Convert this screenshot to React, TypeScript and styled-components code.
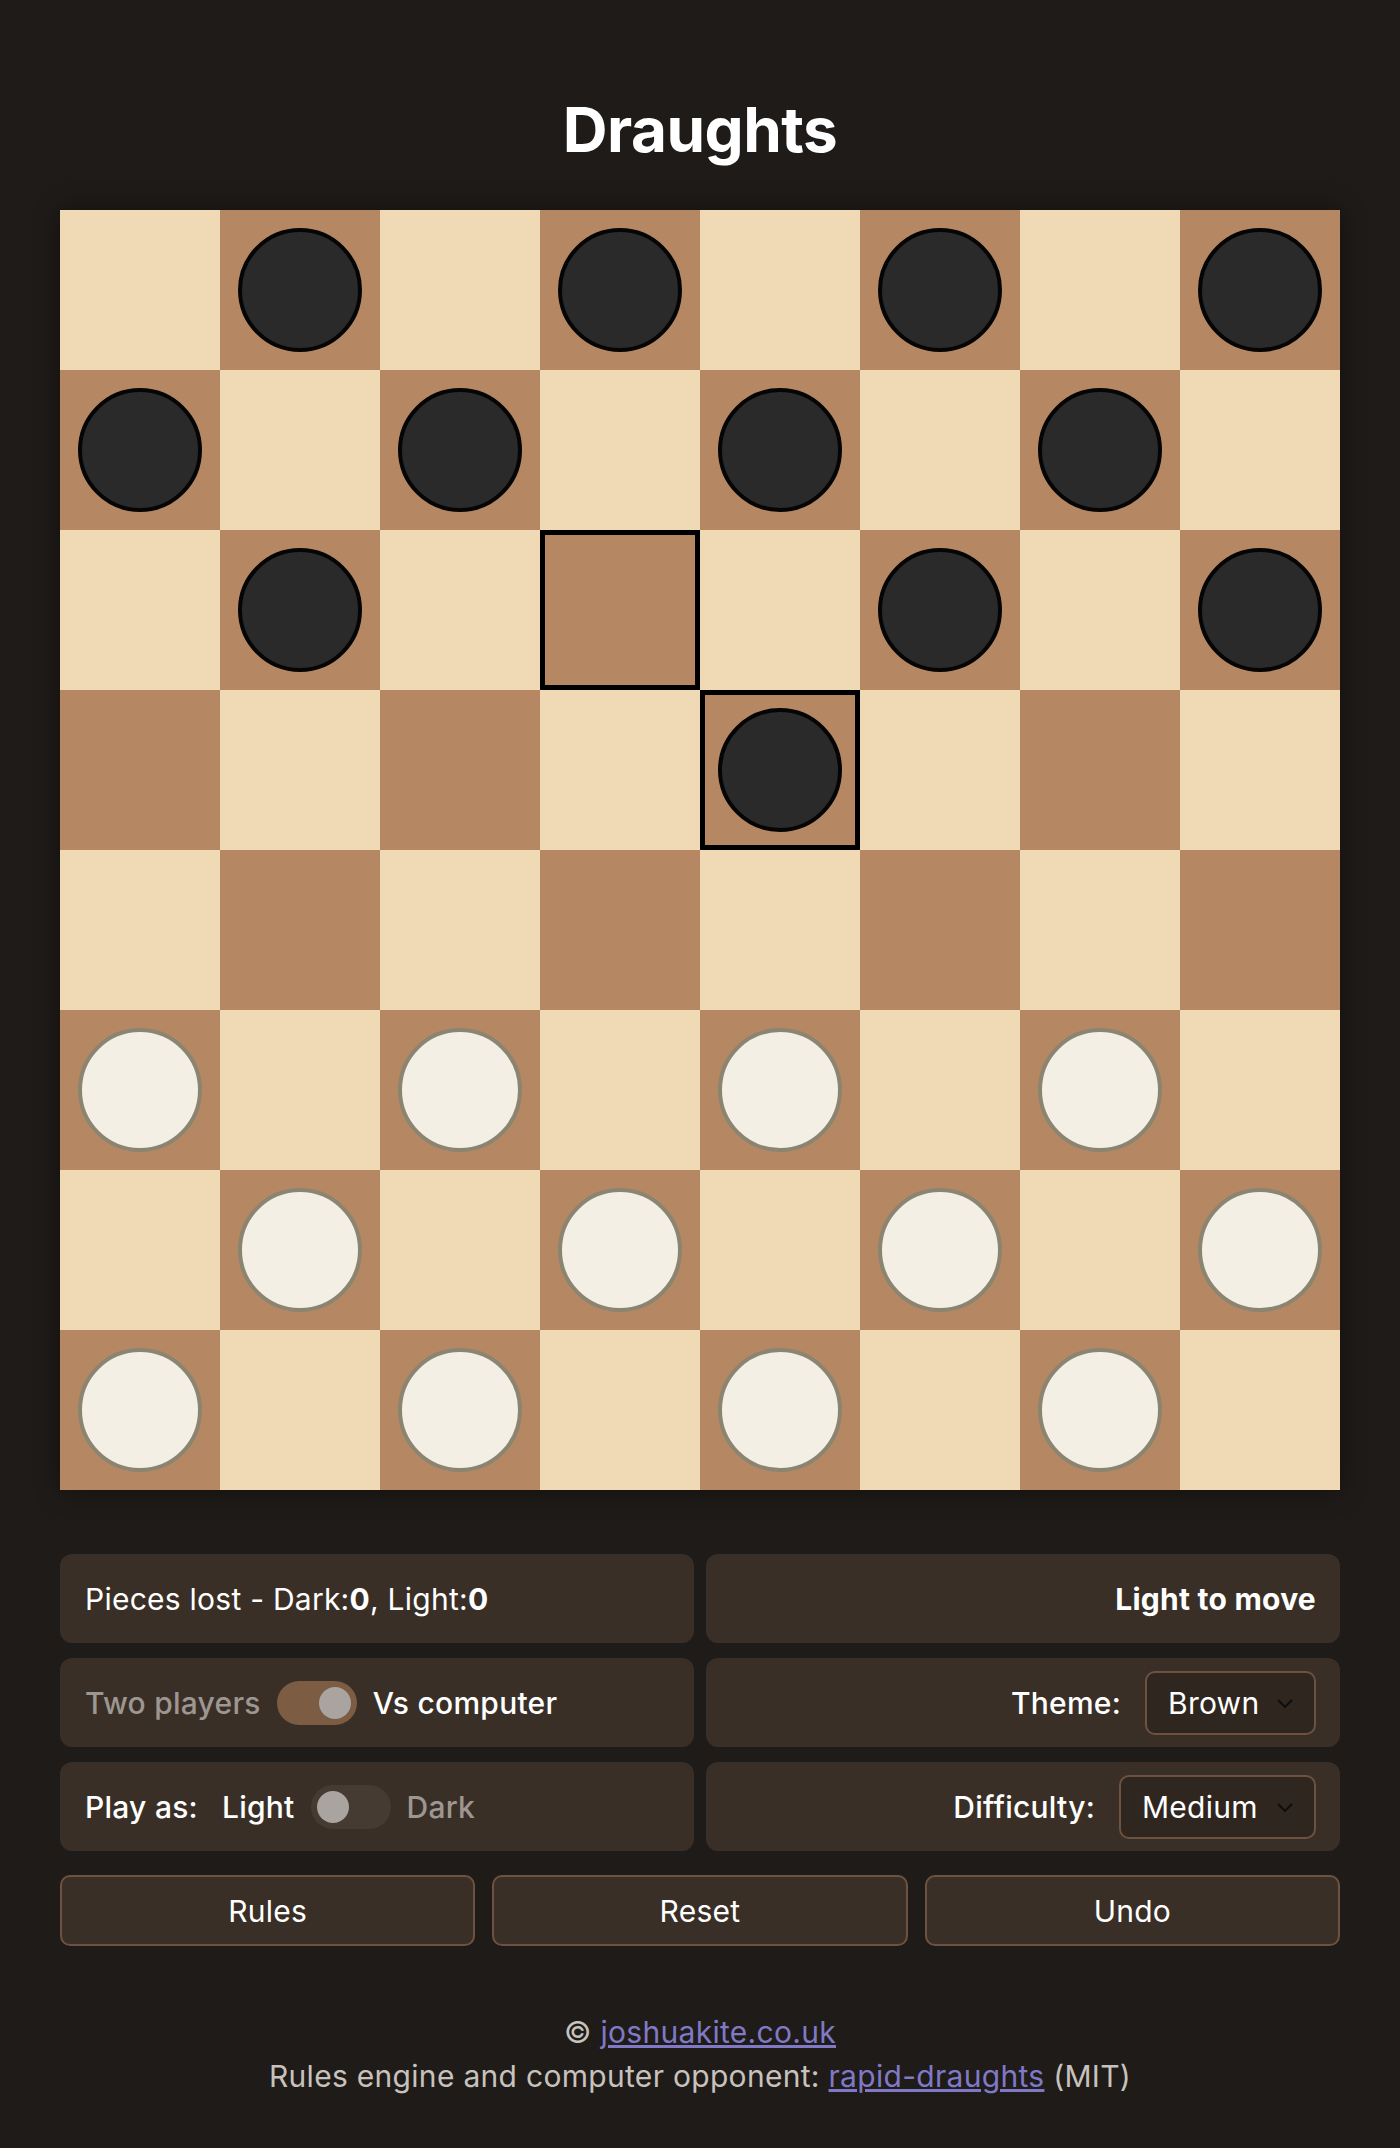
import styled, { createGlobalStyle } from "styled-components";

const GlobalStyle = createGlobalStyle`
  html, body {
    margin: 0;
    padding: 0;
    background: #1f1b18;
  }
  body {
    font-family: Inter, "Noto Sans", "Liberation Sans", sans-serif;
    color: #ffffff;
  }
`;

const Page = styled.main`
  width: 1280px;
  margin: 0 auto;
  padding: 94px 0 60px;
`;

const Title = styled.h1`
  margin: 0 0 44px;
  font-size: 62px;
  line-height: 72px;
  font-weight: 700;
  text-align: center;
  letter-spacing: -0.5px;
`;

const Board = styled.div`
  display: grid;
  grid-template-columns: repeat(8, 160px);
  grid-template-rows: repeat(8, 160px);
  box-shadow: 0 0 24px rgba(0, 0, 0, 0.45);
`;

const Square = styled.div<{ dark: boolean; selected: boolean }>`
  display: flex;
  align-items: center;
  justify-content: center;
  background: ${({ dark }) => (dark ? "#b58863" : "#f0d9b5")};
  box-shadow: ${({ selected }) => (selected ? "inset 0 0 0 5px #000" : "none")};
`;

const Piece = styled.div<{ side: "dark" | "light" }>`
  box-sizing: border-box;
  width: 124px;
  height: 124px;
  border-radius: 50%;
  background: ${({ side }) => (side === "dark" ? "#2a2a2a" : "#f4efe4")};
  border: ${({ side }) =>
    side === "dark" ? "4px solid #050505" : "4px solid #8b8470"};
`;

const Panels = styled.section`
  display: grid;
  grid-template-columns: 1fr 1fr;
  gap: 15px 12px;
  margin-top: 64px;
`;

const Panel = styled.div<{ align?: "start" | "end" }>`
  display: flex;
  align-items: center;
  justify-content: ${({ align }) => (align === "end" ? "flex-end" : "flex-start")};
  gap: 16px;
  height: 89px;
  padding: 0 24px 0 25px;
  border-radius: 12px;
  background: #3a2f27;
  font-size: 30px;
  letter-spacing: 0.25px;
`;

const Label = styled.span<{ muted?: boolean; weight?: number }>`
  color: ${({ muted }) => (muted ? "#9d9691" : "#ffffff")};
  font-weight: ${({ weight }) => weight ?? 400};
  white-space: nowrap;
`;

const Toggle = styled.div<{ on: boolean }>`
  box-sizing: border-box;
  width: 80px;
  height: 44px;
  padding: 6px;
  border-radius: 22px;
  display: flex;
  justify-content: ${({ on }) => (on ? "flex-end" : "flex-start")};
  background: ${({ on }) => (on ? "#7c5c43" : "#463b33")};

  &::after {
    content: "";
    width: 32px;
    height: 32px;
    border-radius: 50%;
    background: #a9a4a0;
  }
`;

const Select = styled.div<{ width: number }>`
  box-sizing: border-box;
  display: flex;
  align-items: center;
  justify-content: space-between;
  width: ${({ width }) => width}px;
  height: 64px;
  padding: 0 20px 0 21px;
  margin-left: 8px;
  border: 2px solid #6d5240;
  border-radius: 10px;
  background: #2f2620;
  color: #ffffff;
  font-size: 30px;
`;

const Buttons = styled.div`
  display: grid;
  grid-template-columns: repeat(3, 1fr);
  gap: 17px;
  margin-top: 24px;
`;

const Button = styled.button`
  height: 71px;
  border: 2px solid #6d5240;
  border-radius: 10px;
  background: #3a2f27;
  color: #ffffff;
  font-family: inherit;
  font-size: 30px;
  letter-spacing: 0.25px;
`;

const Footer = styled.footer`
  margin-top: 64px;
  text-align: center;
  color: #c7c2bd;
  font-size: 30px;
  letter-spacing: 0.3px;
  line-height: 44px;

  a {
    color: #7f79c6;
  }
`;

const Chevron = () => (
  <svg width="18" height="12" viewBox="0 0 18 12" fill="none">
    <path d="M2 3l7 7 7-7" stroke="#0d0d0d" strokeWidth="1.8" />
  </svg>
);

type Cell = "d" | "l" | null;

const layout: Cell[][] = [0, 1, 2, 3, 4, 5, 6, 7].map((r) =>
  [0, 1, 2, 3, 4, 5, 6, 7].map((c) => {
    if ((r + c) % 2 === 0) return null;
    if (r === 2 && c === 3) return null;
    if (r === 3) return c === 4 ? "d" : null;
    if (r < 3) return "d";
    if (r > 4) return "l";
    return null;
  })
);

const selected = ["2-3", "3-4"];

const App = () => (
  <>
    <GlobalStyle />
    <Page>
      <Title>Draughts</Title>
      <Board>
        {layout.map((row, r) =>
          row.map((cell, c) => (
            <Square
              key={`${r}-${c}`}
              dark={(r + c) % 2 === 1}
              selected={selected.includes(`${r}-${c}`)}
            >
              {cell && <Piece side={cell === "d" ? "dark" : "light"} />}
            </Square>
          ))
        )}
      </Board>

      <Panels>
        <Panel>
          <Label>
            Pieces lost - Dark:<b>0</b>, Light:<b>0</b>
          </Label>
        </Panel>
        <Panel align="end">
          <Label weight={700}>Light to move</Label>
        </Panel>
        <Panel>
          <Label muted weight={500}>Two players</Label>
          <Toggle on />
          <Label weight={500}>Vs computer</Label>
        </Panel>
        <Panel align="end">
          <Label weight={500}>Theme:</Label>
          <Select width={171}>
            Brown
            <Chevron />
          </Select>
        </Panel>
        <Panel>
          <Label weight={500} style={{ marginRight: 8 }}>
            Play as:
          </Label>
          <Label weight={500}>Light</Label>
          <Toggle on={false} />
          <Label muted weight={500}>Dark</Label>
        </Panel>
        <Panel align="end">
          <Label weight={500}>Difficulty:</Label>
          <Select width={197}>
            Medium
            <Chevron />
          </Select>
        </Panel>
      </Panels>

      <Buttons>
        <Button>Rules</Button>
        <Button>Reset</Button>
        <Button>Undo</Button>
      </Buttons>

      <Footer>
        <div>
          © <a href="#">joshuakite.co.uk</a>
        </div>
        <div>
          Rules engine and computer opponent: <a href="#">rapid-draughts</a> (MIT)
        </div>
      </Footer>
    </Page>
  </>
);

export default App;
